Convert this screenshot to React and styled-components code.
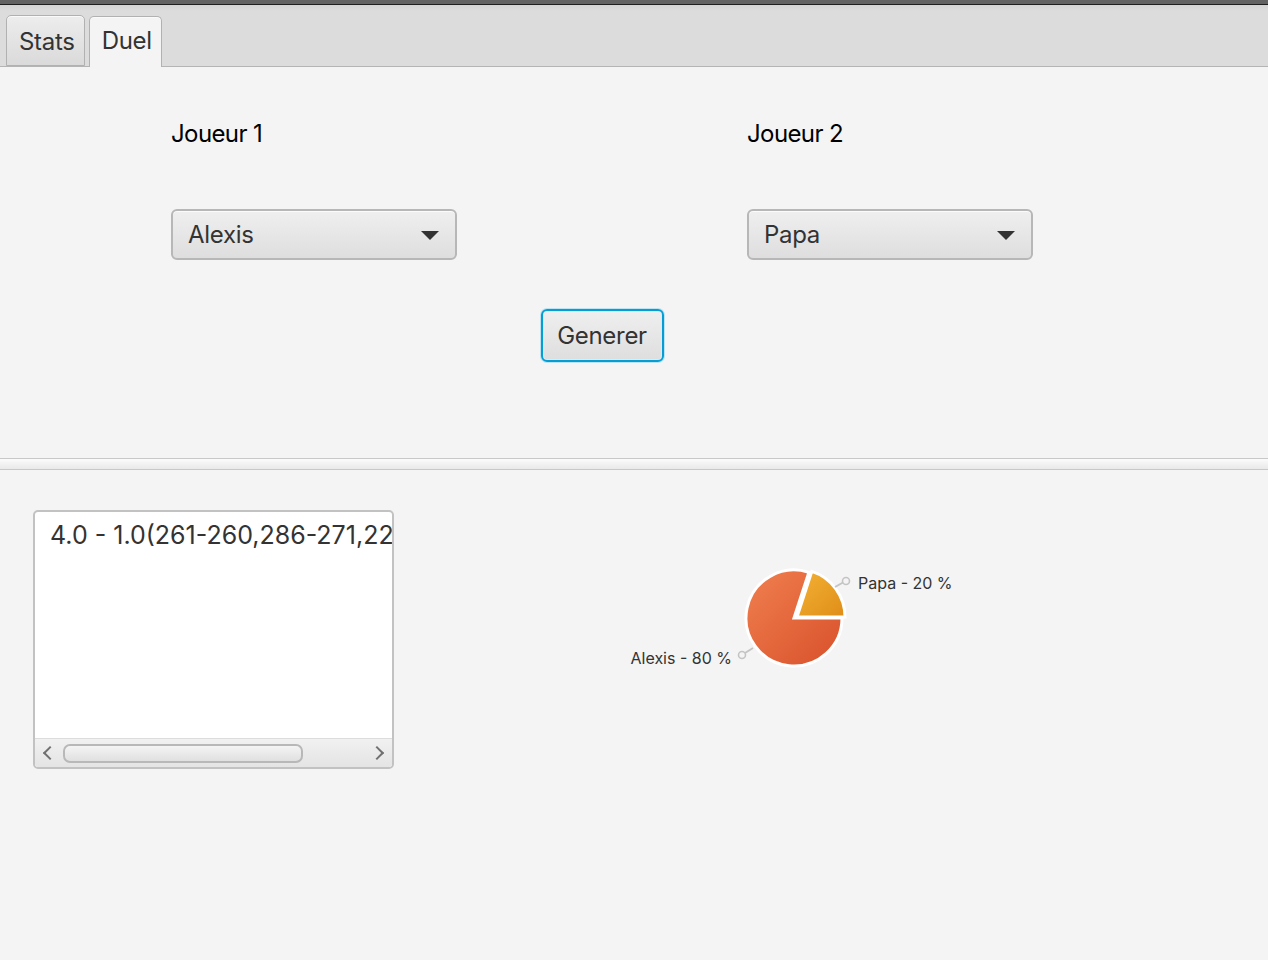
import React from "react";
import styled, { createGlobalStyle } from "styled-components";

const Global = createGlobalStyle`
  html, body { margin: 0; padding: 0; }
  body {
    background: #f4f4f4;
    font-family: Inter, "Open Sans", "Liberation Sans", sans-serif;
    color: #333;
  }
`;

const Window = styled.div`
  width: 1268px;
  height: 960px;
  display: flex;
  flex-direction: column;
  background: #f4f4f4;
  overflow: hidden;
`;

const TitleEdge = styled.div`
  height: 4px;
  background: #626262;
  border-bottom: 1px solid #1e1e1e;
`;

const TabHeader = styled.div`
  height: 61px;
  display: flex;
  align-items: flex-end;
  gap: 4px;
  padding-left: 6px;
  background: linear-gradient(#d3d3d3, #dcdcdc 6px);
  border-bottom: 1px solid #b4b4b4;
`;

const Tab = styled.div`
  height: 51px;
  margin-bottom: ${(p) => (p.$active ? "-1px" : "0")};
  box-sizing: border-box;
  padding: ${(p) => (p.$active ? "0 9px 3px 12px" : "2px 9px 0 12px")};
  display: flex;
  align-items: center;
  border: 1px solid #b1b1b1;
  border-bottom: ${(p) => (p.$active ? "none" : "1px solid #b1b1b1")};
  border-radius: 5px 5px 0 0;
  background: ${(p) =>
    p.$active ? "#f4f4f4" : "linear-gradient(#ededed, #dadada)"};
  box-shadow: inset 0 1px 0 #fafafa;
  font-size: 24px;
  letter-spacing: -0.3px;
  color: #333;
`;

const TopPane = styled.div`
  height: 391px;
  padding: 51px 0 0 171px;
  box-sizing: border-box;
`;

const Form = styled.div`
  display: grid;
  grid-template-columns: 576px 286px;
  grid-template-rows: auto auto auto;
`;

const Label = styled.div`
  font-size: 24px;
  font-weight: 400;
  letter-spacing: -0.6px;
  color: #000;
  line-height: 32px;
`;

const ComboCell = styled.div`
  margin-top: 59px;
`;

const Combo = styled.div`
  width: 286px;
  height: 51px;
  box-sizing: border-box;
  border: 2px solid #b7b7b7;
  border-radius: 6px;
  background: linear-gradient(#efefef, #dedede);
  box-shadow: inset 0 1px 0 #fbfbfb;
  display: flex;
  align-items: center;
  justify-content: space-between;
  padding: 0 16px 0 15px;
  font-size: 24px;
  letter-spacing: -0.3px;
  color: #333;
`;

const Arrow = styled.span`
  width: 0;
  height: 0;
  border-left: 9px solid transparent;
  border-right: 9px solid transparent;
  border-top: 9px solid #333;
  margin-top: 2px;
`;

const ButtonRow = styled.div`
  grid-column: 1 / -1;
  display: flex;
  justify-content: center;
  margin-top: 49px;
`;

const Button = styled.div`
  width: 123px;
  height: 53px;
  box-sizing: border-box;
  border: 2px solid #039ed3;
  border-radius: 6px;
  background: linear-gradient(#efefef, #dedede);
  box-shadow: inset 0 0 0 1px #dcebf2, 0 0 0 1px #bfe2f1;
  display: flex;
  align-items: center;
  justify-content: center;
  font-size: 24px;
  letter-spacing: -0.3px;
  color: #333;
`;

const Divider = styled.div`
  height: 12px;
  box-sizing: border-box;
  border-top: 1px solid #c8c8c8;
  border-bottom: 1px solid #c8c8c8;
  background: linear-gradient(#fbfbfb, #e9e9e9);
`;

const BottomPane = styled.div`
  flex: 1;
  display: flex;
  align-items: flex-start;
  padding: 40px 0 0 33px;
`;

const TextArea = styled.div`
  width: 361px;
  height: 259px;
  box-sizing: border-box;
  border: 2px solid #c2c2c2;
  border-radius: 5px;
  background: #fff;
  display: flex;
  flex-direction: column;
  overflow: hidden;
`;

const TextLine = styled.div`
  flex: 1;
  padding: 8px 0 0 15px;
  font-size: 25px;
  letter-spacing: 0;
  white-space: nowrap;
  overflow: hidden;
  color: #333;
`;

const HScroll = styled.div`
  height: 28px;
  display: flex;
  align-items: center;
  gap: 8px;
  padding: 0 8px;
  border-top: 1px solid #dcdcdc;
  background: linear-gradient(#f1f1f1, #e4e4e4);
`;

const ScrollArrow = styled.span`
  width: 8px;
  height: 8px;
  border-left: 2px solid #707070;
  border-bottom: 2px solid #707070;
  transform: ${(p) => (p.$right ? "rotate(-135deg)" : "rotate(45deg)")};
  margin: ${(p) => (p.$right ? "0 2px 0 auto" : "0 0 0 2px")};
`;

const Thumb = styled.div`
  width: 240px;
  height: 19px;
  box-sizing: border-box;
  border: 2px solid #b8b8b8;
  border-radius: 7px;
  background: linear-gradient(#f4f4f4, #e0e0e0);
`;

const Chart = styled.svg`
  margin-left: 200px;
  flex: none;
  font-family: Inter, "Open Sans", "Liberation Sans", sans-serif;
`;

function PieChart() {
  const cx = 200;
  const cy = 108;
  const r = 48;
  const a = (72 * Math.PI) / 180;
  const px = cx + r * Math.cos(a);
  const py = cy - r * Math.sin(a);
  return (
    <Chart width="420" height="220" viewBox="0 0 420 220">
      <defs>
        <linearGradient id="gA" x1="0" y1="0" x2="1" y2="1">
          <stop offset="0" stopColor="#f0804f" />
          <stop offset="1" stopColor="#d8502a" />
        </linearGradient>
        <linearGradient id="gP" x1="0" y1="0" x2="1" y2="1">
          <stop offset="0" stopColor="#f3b234" />
          <stop offset="1" stopColor="#df8d18" />
        </linearGradient>
      </defs>
      <path
        d={`M${cx},${cy} L${px},${py} A${r},${r} 0 1 0 ${cx + r},${cy} Z`}
        fill="url(#gA)"
        stroke="#fff"
        strokeWidth="3"
      />
      <path
        d={`M${cx + 3},${cy - 1} L${px + 3},${py - 1} A${r},${r} 0 0 1 ${cx + r + 3},${cy - 1} Z`}
        fill="url(#gP)"
        stroke="#fff"
        strokeWidth="3"
      />
      <line x1="241" y1="77" x2="249" y2="72.5" stroke="#c4c4c4" strokeWidth="2" />
      <circle cx="252" cy="71" r="3.5" fill="none" stroke="#c4c4c4" strokeWidth="1.6" />
      <text x="264" y="79" fontSize="16" fill="#333">
        Papa - 20 %
      </text>
      <line x1="159" y1="138" x2="151" y2="143" stroke="#c4c4c4" strokeWidth="2" />
      <circle cx="148" cy="145" r="3.5" fill="none" stroke="#c4c4c4" strokeWidth="1.6" />
      <text x="138" y="154" fontSize="16" fill="#333" textAnchor="end">
        Alexis - 80 %
      </text>
    </Chart>
  );
}

export default function App() {
  return (
    <>
      <Global />
      <Window>
        <TitleEdge />
        <TabHeader>
          <Tab>Stats</Tab>
          <Tab $active>Duel</Tab>
        </TabHeader>
        <TopPane>
          <Form>
            <Label>Joueur 1</Label>
            <Label>Joueur 2</Label>
            <ComboCell>
              <Combo>
                Alexis
                <Arrow />
              </Combo>
            </ComboCell>
            <ComboCell>
              <Combo>
                Papa
                <Arrow />
              </Combo>
            </ComboCell>
            <ButtonRow>
              <Button>Generer</Button>
            </ButtonRow>
          </Form>
        </TopPane>
        <Divider />
        <BottomPane>
          <TextArea>
            <TextLine>4.0 - 1.0(261-260,286-271,220-250,270-263,254-201)</TextLine>
            <HScroll>
              <ScrollArrow />
              <Thumb />
              <ScrollArrow $right />
            </HScroll>
          </TextArea>
          <PieChart />
        </BottomPane>
      </Window>
    </>
  );
}
